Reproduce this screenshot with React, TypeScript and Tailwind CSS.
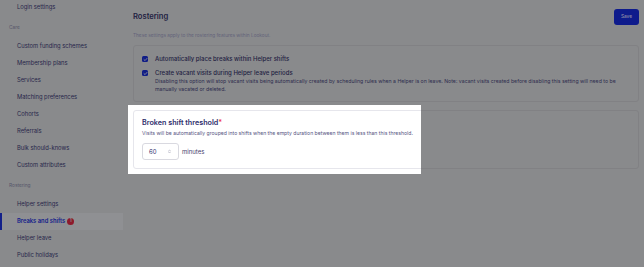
import React from "react";

type NavEntry = { kind: "item"; label: string; active?: boolean; badge?: number } | { kind: "header"; label: string };

const nav: NavEntry[] = [
  { kind: "item", label: "Login settings" },
  { kind: "header", label: "Care" },
  { kind: "item", label: "Custom funding schemes" },
  { kind: "item", label: "Membership plans" },
  { kind: "item", label: "Services" },
  { kind: "item", label: "Matching preferences" },
  { kind: "item", label: "Cohorts" },
  { kind: "item", label: "Referrals" },
  { kind: "item", label: "Bulk should-knows" },
  { kind: "item", label: "Custom attributes" },
  { kind: "header", label: "Rostering" },
  { kind: "item", label: "Helper settings" },
  { kind: "item", label: "Breaks and shifts", active: true, badge: 1 },
  { kind: "item", label: "Helper leave" },
  { kind: "item", label: "Public holidays" },
];

// Everything outside the tour spotlight is painted in its dimmed colours.
function Checkbox() {
  return (
    <span className="mt-[1px] flex h-[6px] w-[6px] shrink-0 items-center justify-center rounded-[1.5px] bg-[#101d86]">
      <svg viewBox="0 0 10 10" className="h-[5px] w-[5px]" fill="none" stroke="#8c8c9a" strokeWidth="1.8">
        <path d="M2 5.2 4.1 7.2 8 2.8" strokeLinecap="round" strokeLinejoin="round" />
      </svg>
    </span>
  );
}

function Sidebar() {
  return (
    <aside className="w-[123px] shrink-0 bg-[#898a8c]">
      <div className="-mt-[1.5px]">
        {nav.map((entry) =>
          entry.kind === "header" ? (
            <div key={entry.label} className="flex h-[22px] items-center pt-[3px] pl-[9px] text-[4.8px] text-[#56566a]">
              {entry.label}
            </div>
          ) : (
            <div
              key={entry.label}
              className={`relative flex h-[17px] items-center pl-[17px] text-[5.8px] ${
                entry.active ? "bg-[#8f9093] font-semibold text-[#13208a]" : "text-[#27264a]"
              }`}
            >
              {entry.active ? <span className="absolute left-0 top-0 h-full w-[2px] bg-[#13208a]" /> : null}
              {entry.label}
              {entry.badge ? (
                <span className="ml-[2px] flex h-[7px] w-[7px] items-center justify-center rounded-full bg-[#8e1a2c] text-[4.5px] font-bold text-[#8c8c8c]">
                  {entry.badge}
                </span>
              ) : null}
            </div>
          ),
        )}
      </div>
    </aside>
  );
}

function ThresholdCard() {
  return (
    <section className="h-[59px] w-[506px] rounded-[3px] border border-[#e6e6ec] bg-white px-[8px] pt-[7px]">
      <div className="h-[9px] text-[7.2px] font-semibold leading-[9px] text-[#2e2d6b]">
        Broken shift threshold<span className="text-[#ef3b4f]">*</span>
      </div>
      <p className="mt-[3px] h-[7px] text-[5.1px] leading-[7px] text-[#55547f]">
        Visits will be automatically grouped into shifts when the empty duration between them is less than this threshold.
      </p>
      <div className="mt-[5.5px] flex items-center gap-[3px]">
        <div className="flex h-[17px] w-[37px] items-center justify-between rounded-[3px] border border-[#d9d9e0] bg-white pl-[6px] pr-[7px]">
          <span className="text-[6px] text-[#2e2d6b]">60</span>
          <svg viewBox="0 0 6 10" className="h-[5px] w-[3px]" fill="none" stroke="#8a8aa0" strokeWidth="1">
            <path d="M1 4 3 2 5 4M1 6 3 8 5 6" strokeLinecap="round" strokeLinejoin="round" />
          </svg>
        </div>
        <span className="text-[6px] text-[#3f3e6a]">minutes</span>
      </div>
    </section>
  );
}

export default function App() {
  return (
    <div
      className="relative flex h-[267px] w-[644px] overflow-hidden bg-[#898a8c]"
      style={{ fontFamily: "Inter, 'Noto Sans', sans-serif" }}
    >
      <Sidebar />

      <main className="flex-1 pl-[10px] pr-[5px]">
        <div className="mt-[9px] flex h-[16px] items-center justify-between">
          <h1 className="text-[7.6px] font-semibold text-[#1f1e42]">Rostering</h1>
          <button type="button" className="h-[16px] w-[25px] rounded-[3px] bg-[#0e1b8c] text-[4.8px] font-medium text-[#8e8ea6]">
            Save
          </button>
        </div>

        <p className="mt-[6px] h-[8px] text-[4.75px] leading-[8px] text-[#63637a]">
          These settings apply to the rostering features within Lookout.
        </p>

        <section className="mt-[6px] h-[57px] rounded-[3px] border border-[#818184] px-[8px] pt-[9px]">
          <div className="flex items-start gap-[7px] leading-[8px]">
            <Checkbox />
            <span className="text-[6px] font-medium text-[#1f1e42]">Automatically place breaks within Helper shifts</span>
          </div>
          <div className="mt-[6px] flex items-start gap-[7px] leading-[8px]">
            <Checkbox />
            <div>
              <div className="text-[6px] font-medium text-[#1f1e42]">Create vacant visits during Helper leave periods</div>
              <div className="pr-[2px] text-[5.2px] text-[#2e2d4e]">
                Disabling this option will stop vacant visits being automatically created by scheduling rules when a Helper is on
                leave. Note: vacant visits created before disabling this setting will need to be manually vacated or deleted.
              </div>
            </div>
          </div>
        </section>

        <section className="mt-[8px] h-[59px] rounded-[3px] border border-[#818184]" />
      </main>

      <div className="absolute left-[128px] top-[105px] h-[69px] w-[293px] overflow-hidden bg-white p-[5px]">
        <ThresholdCard />
      </div>
    </div>
  );
}
